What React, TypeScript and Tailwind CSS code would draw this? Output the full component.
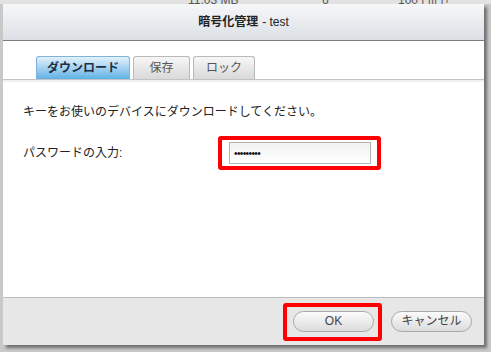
import React from 'react';

const jp = { fontFamily: '"Liberation Sans", "Noto Sans CJK JP", sans-serif' };

function Tab({ label, active, width }: { label: string; active?: boolean; width: string }) {
  return (
    <div
      className={`${width} h-[23px] flex items-center justify-center rounded-t-[3px] border border-b-0 text-[12px] ${
        active
          ? 'bg-gradient-to-b from-[#e3f1fb] to-[#5eb1e6] border-[#7fb3d8] font-bold text-[#1b2f45]'
          : 'bg-gradient-to-b from-[#f7f7f7] to-[#d9d9d9] border-[#b9b9b9] text-[#555]'
      }`}
    >
      {label}
    </div>
  );
}

function PillButton({ label }: { label: string }) {
  return (
    <div className="w-[81px] h-[21px] rounded-full border border-[#a9a9a9] bg-gradient-to-b from-[#fbfbfb] to-[#dcdcdc] flex items-center justify-center text-[12px] text-[#444]">
      {label}
    </div>
  );
}

export default function App() {
  return (
    <div className="relative w-[491px] h-[352px] bg-[#c9c9c9] overflow-hidden" style={jp}>
      {/* Table behind the dialog */}
      <div className="absolute left-0 right-0 top-[-9px] h-[13px] flex text-[12px] text-[#555] bg-[#e2e2e2]">
        <span className="absolute left-[188px]">11.03 MB</span>
        <span className="absolute left-[322px]">6</span>
        <span className="absolute left-[398px]">100 | ||| |+</span>
      </div>

      {/* Dialog */}
      <div className="relative ml-[3px] mt-[4px] w-[481px] h-[341px] flex flex-col bg-white shadow-[3px_3px_3px_rgba(0,0,0,0.45)]">
        <div className="h-[37px] shrink-0 flex items-center justify-center border-b border-[#7d7d7d] bg-gradient-to-b from-[#f6f7f9] to-[#dce0e5] text-[12px] text-[#222]">
          <span className="font-bold">暗号化管理</span>
          <span className="ml-1">- test</span>
        </div>

        <div className="pt-[15px] pl-[33px] flex gap-[3px]">
          <Tab label="ダウンロード" active width="w-[94px]" />
          <Tab label="保存" width="w-[57px]" />
          <Tab label="ロック" width="w-[62px]" />
        </div>
        <div className="h-[3px] border-t border-[#c4c4c4] bg-[#f0f0f0]" />

        <div className="flex-1 px-[20px] pt-[21px] text-[12px] text-[#222]">
          <div>キーをお使いのデバイスにダウンロードしてください。</div>
          <div className="mt-[21px] flex items-center">
            <span className="w-[206px]">パスワードの入力:</span>
            <div className="relative">
              <div className="w-[142px] h-[22px] border border-[#b3b3b3] bg-gradient-to-b from-[#f1f1f1] to-white flex items-center pl-[4px] text-[10px] tracking-[-0.6px] text-[#111]">
                •••••••••
              </div>
              <div className="absolute left-[-11px] top-[-6px] w-[163px] h-[34px] border-[4.5px] border-[#ff0000] rounded-[3px]" />
            </div>
          </div>
        </div>

        <div className="h-[48px] shrink-0 border-t border-[#bdbdbd] bg-[#e7e7e7] flex items-center justify-end pr-[12px] pb-[1px] gap-[17px]">
          <div className="relative">
            <PillButton label="OK" />
            <div className="absolute left-[-10px] top-[-8px] w-[99px] h-[38px] border-[4.5px] border-[#ff0000] rounded-[3px]" />
          </div>
          <PillButton label="キャンセル" />
        </div>
      </div>
    </div>
  );
}
